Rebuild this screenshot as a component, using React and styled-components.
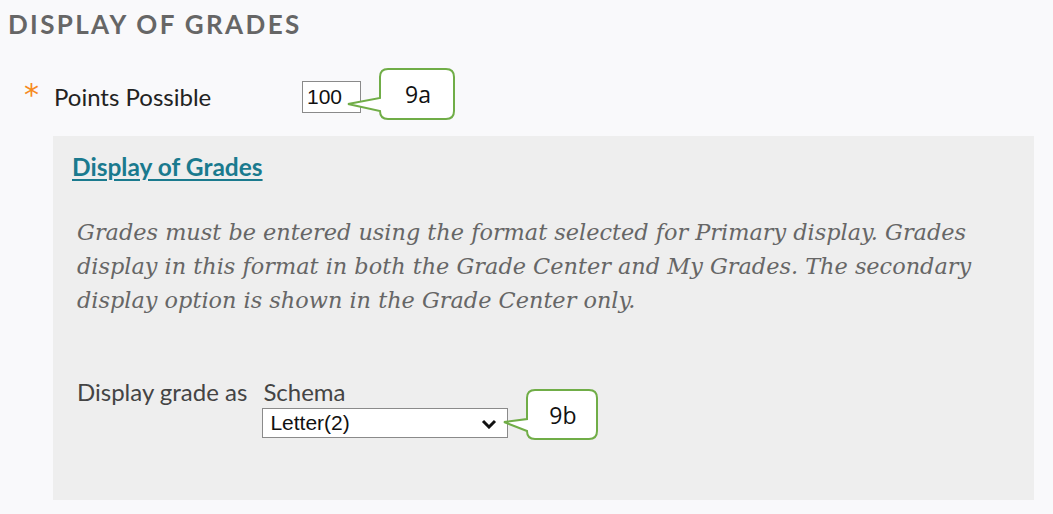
import React from "react";
import styled, { createGlobalStyle } from "styled-components";

const Global = createGlobalStyle`
  html, body { margin: 0; padding: 0; background: #f9f9fb; }
  body { width: 1053px; height: 514px; overflow: hidden; }
`;

const Page = styled.div`
  padding: 7px 0 0 8px;
  font-family: Lato, "Open Sans", sans-serif;
  color: #222;
`;

const Heading = styled.h2`
  margin: 0;
  font-family: Lato, sans-serif;
  font-weight: 700;
  font-size: 26px;
  letter-spacing: 2.35px;
  color: #666;
  line-height: 34px;
`;

const FieldRow = styled.div`
  display: flex;
  align-items: center;
  margin-top: 39px;
  padding-left: 16px;
  height: 34px;
`;

const Required = styled.span`
  color: #f68b1f;
  font-family: "DejaVu Sans", sans-serif;
  font-size: 30px;
  width: 30px;
  line-height: 1;
  align-self: flex-start;
`;

const Label = styled.span`
  font-size: 24px;
  width: 248px;
  color: #222;
  margin-top: -2px;
`;

const InputWrap = styled.div`
  position: relative;
`;

const NumberInput = styled.div`
  width: 53px;
  height: 30px;
  border: 1px solid #8a8a8a;
  background: #fff;
  box-sizing: content-box;
  font-family: "Liberation Sans", Arial, sans-serif;
  font-size: 21px;
  line-height: 30px;
  padding-left: 4px;
  color: #111;
`;

const Callout = styled.div`
  position: absolute;
  left: ${(p) => p.left}px;
  top: ${(p) => p.top}px;
  width: ${(p) => p.w}px;
  height: ${(p) => p.h}px;
`;

const CalloutText = styled.span`
  position: absolute;
  right: 0;
  top: 0;
  width: ${(p) => p.boxW}px;
  height: 100%;
  display: flex;
  align-items: center;
  justify-content: center;
  font-family: "Open Sans", "Liberation Sans", sans-serif;
  font-size: 23px;
  color: #111;
`;

const Panel = styled.section`
  margin: 22px 0 0 45px;
  width: 981px;
  height: 364px;
  box-sizing: border-box;
  background: #eeeeee;
  padding: 16px 20px 0 19px;
`;

const PanelLink = styled.a`
  font-family: Lato, sans-serif;
  font-weight: 700;
  font-size: 24.5px;
  color: #1a7a8e;
  text-decoration: underline;
  text-underline-offset: 3px;
  text-decoration-thickness: 2px;
`;

const Help = styled.p`
  margin: 34px 0 0 5px;
  font-family: "DejaVu Serif", serif;
  font-style: italic;
  font-size: 22.4px;
  line-height: 34px;
  color: #666;
`;

const GradeRow = styled.div`
  display: flex;
  margin: 61px 0 0 5px;
  gap: 16px;
`;

const GradeLabel = styled.span`
  font-size: 24px;
  color: #444;
  line-height: 28px;
`;

const SelectCol = styled.div`
  display: flex;
  flex-direction: column;
`;

const SelectLike = styled.div`
  margin-top: 2px;
  margin-left: -1px;
  width: 237px;
  height: 28px;
  box-sizing: content-box;
  border: 1px solid #8a8a8a;
  background: #fff;
  display: flex;
  align-items: center;
  justify-content: space-between;
  padding-left: 7px;
  font-family: "Liberation Sans", Arial, sans-serif;
  font-size: 21px;
  color: #111;
`;

const Chevron = styled.svg`
  margin-right: 10px;
  margin-top: 2px;
`;

function CalloutShape({ w, h, boxX, baseTop, baseBottom, tipY }) {
  const r = 8;
  const x0 = boxX, x1 = w - 1, y0 = 1, y1 = h - 1;
  const d = `M${x0 + r},${y0} H${x1 - r} Q${x1},${y0} ${x1},${y0 + r} V${y1 - r} Q${x1},${y1} ${x1 - r},${y1} H${x0 + r} Q${x0},${y1} ${x0},${y1 - r} V${baseBottom} L1,${tipY} L${x0},${baseTop} V${y0 + r} Q${x0},${y0} ${x0 + r},${y0} Z`;
  return (
    <svg width={w} height={h} style={{ position: "absolute", left: 0, top: 0 }}>
      <path d={d} fill="#fff" stroke="#70ad47" strokeWidth="2" />
    </svg>
  );
}

export default function App() {
  return (
    <>
      <Global />
      <Page>
        <Heading>DISPLAY OF GRADES</Heading>
        <FieldRow>
          <Required>*</Required>
          <Label>Points Possible</Label>
          <InputWrap>
            <NumberInput>100</NumberInput>
            <Callout left={45} top={-13} w={108} h={52}>
              <CalloutShape w={108} h={52} boxX={33} baseTop={30} baseBottom={43} tipY={36} />
              <CalloutText boxW={74}>9a</CalloutText>
            </Callout>
          </InputWrap>
        </FieldRow>
        <Panel>
          <PanelLink href="#">Display of Grades</PanelLink>
          <Help>
            Grades must be entered using the format selected for Primary display. Grades
            <br />
            display in this format in both the Grade Center and My Grades. The secondary
            <br />
            display option is shown in the Grade Center only.
          </Help>
          <GradeRow>
            <GradeLabel>Display grade as</GradeLabel>
            <SelectCol>
              <GradeLabel>Schema</GradeLabel>
              <InputWrap>
                <SelectLike>
                  Letter(2)
                  <Chevron width="16" height="10" viewBox="0 0 16 10">
                    <path d="M2 2 L8 8 L14 2" fill="none" stroke="#111" strokeWidth="3" />
                  </Chevron>
                </SelectLike>
                <Callout left={240} top={-17} w={95} h={51}>
                  <CalloutShape w={95} h={51} boxX={24} baseTop={30} baseBottom={42} tipY={33} />
                  <CalloutText boxW={71}>9b</CalloutText>
                </Callout>
              </InputWrap>
            </SelectCol>
          </GradeRow>
        </Panel>
      </Page>
    </>
  );
}
